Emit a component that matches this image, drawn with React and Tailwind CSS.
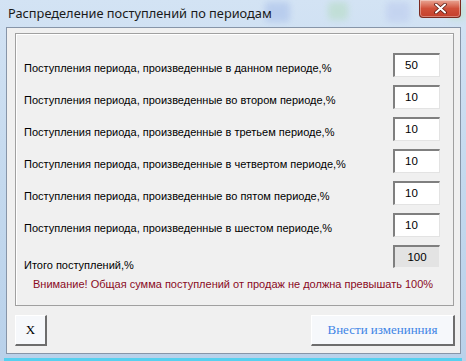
import React from "react";

const rows = [
  { label: "Поступления периода, произведенные в данном периоде,%", value: "50" },
  { label: "Поступления периода, произведенные во втором периоде,%", value: "10" },
  { label: "Поступления периода, произведенные в третьем периоде,%", value: "10" },
  { label: "Поступления периода, произведенные в четвертом периоде,%", value: "10" },
  { label: "Поступления периода, произведенные во пятом периоде,%", value: "10" },
  { label: "Поступления периода, произведенные в шестом периоде,%", value: "10" },
];

const tahoma = { fontFamily: '"Liberation Sans", Arial, sans-serif' };

export default function App() {
  return (
    <div className="w-[466px] h-[361px] flex flex-col bg-gradient-to-b from-[#d3e3f4] via-[#c4d9ee] to-[#b9d1ea] overflow-hidden">
      {/* title bar */}
      <div className="h-[27px] flex items-start shrink-0 relative">
        <div className="absolute inset-0 flex gap-[38px] pl-[265px] pt-[2px] opacity-60">
          <div className="w-[28px] h-[20px] rounded bg-[#a9c0ea] blur-[3px]" />
          <div className="w-[22px] h-[18px] rounded bg-[#b6dcc4] blur-[3px]" />
          <div className="w-[26px] h-[20px] rounded bg-[#bccbee] blur-[3px]" />
          <div className="w-[20px] h-[18px] rounded bg-[#bfe0c8] blur-[3px]" />
        </div>
        <span
          className="relative pl-[8px] pt-[5px] text-[12.8px] text-[#1a1a1a] leading-[16px]"
          style={{ fontFamily: '"Noto Sans", "Open Sans", sans-serif' }}
        >
          Распределение поступлений по периодам
        </span>
        <button className="relative ml-auto mr-[5px] w-[42px] h-[18px] rounded-b-[4px] border border-t-0 border-[#7a2a20] bg-gradient-to-b from-[#e8a595] via-[#d0503a] to-[#c4402c] flex items-center justify-center shadow-[inset_0_0_0_1px_rgba(255,255,255,0.35)]">
          <svg width="13" height="11" viewBox="0 0 13 11">
            <path d="M2 1.5 L11 9.5 M11 1.5 L2 9.5" stroke="#5a1a12" strokeWidth="3.6" strokeLinecap="round" />
            <path d="M2 1.5 L11 9.5 M11 1.5 L2 9.5" stroke="#ffffff" strokeWidth="2" strokeLinecap="round" />
          </svg>
        </button>
      </div>

      {/* client area */}
      <div className="ml-[6px] mr-[5px] h-[327px] border border-[#8795a8] bg-[#f0f0f0] flex flex-col" style={tahoma}>
        <div className="mt-[5px] ml-[8px] mr-[6px] h-[273px] border border-[#a0a0a0] shadow-[inset_1px_1px_0_#ffffff] flex flex-col pt-[19px] pl-[8px] pr-[13px]">
          {rows.map((r) => (
            <div key={r.label} className="h-[32px] flex items-start justify-between shrink-0">
              <span className="pt-[8px] text-[11px] leading-[14px] text-black">{r.label}</span>
              <div className="w-[47px] h-[24px] bg-white border-t-2 border-l-2 border-b border-r border-t-[#7f7f7f] border-l-[#7f7f7f] border-b-[#e3e3e3] border-r-[#e3e3e3] text-[11.5px] leading-[14px] pl-[10px] pt-[3px] text-black">
                {r.value}
              </div>
            </div>
          ))}
          <div className="h-[30px] flex items-start justify-between shrink-0">
            <span className="pt-[13px] text-[11px] leading-[14px] text-black">Итого поступлений,%</span>
            <div className="w-[47px] h-[23px] bg-[#e3e3e3] border-t-2 border-l-2 border-b border-r border-t-[#7f7f7f] border-l-[#7f7f7f] border-b-[#f0f0f0] border-r-[#f0f0f0] text-[11.5px] leading-[14px] text-center pt-[3px] text-black">
              100
            </div>
          </div>
          <div className="pt-[2px] text-[11px] leading-[14px] text-[#8a0a1e] whitespace-nowrap pl-[9px]">
            Внимание! Общая сумма поступлений от продаж не должна превышать 100%
          </div>
        </div>

        <div className="mt-[9px] ml-[8px] mr-[5px] flex justify-between">
          <button
            className="w-[32px] h-[31px] bg-[#f6f8fb] border-t border-l border-b-2 border-r-2 border-t-[#ffffff] border-l-[#ffffff] border-b-[#6d6d6d] border-r-[#6d6d6d] text-[13px] text-black flex items-center justify-center"
            style={{ fontFamily: '"Liberation Serif", "Times New Roman", serif' }}
          >
            X
          </button>
          <button
            className="w-[144px] h-[31px] bg-[#f6f8fb] border-t border-l border-b-2 border-r-2 border-t-[#ffffff] border-l-[#ffffff] border-b-[#6d6d6d] border-r-[#6d6d6d] text-[13px] text-[#3d84e6] flex items-center justify-center"
            style={{ fontFamily: '"Liberation Serif", "Times New Roman", serif' }}
          >
            Внести изменинния
          </button>
        </div>
      </div>

      <div className="mt-auto h-[3px] bg-[#3fd0f0] mx-[4px] opacity-80" />
    </div>
  );
}
